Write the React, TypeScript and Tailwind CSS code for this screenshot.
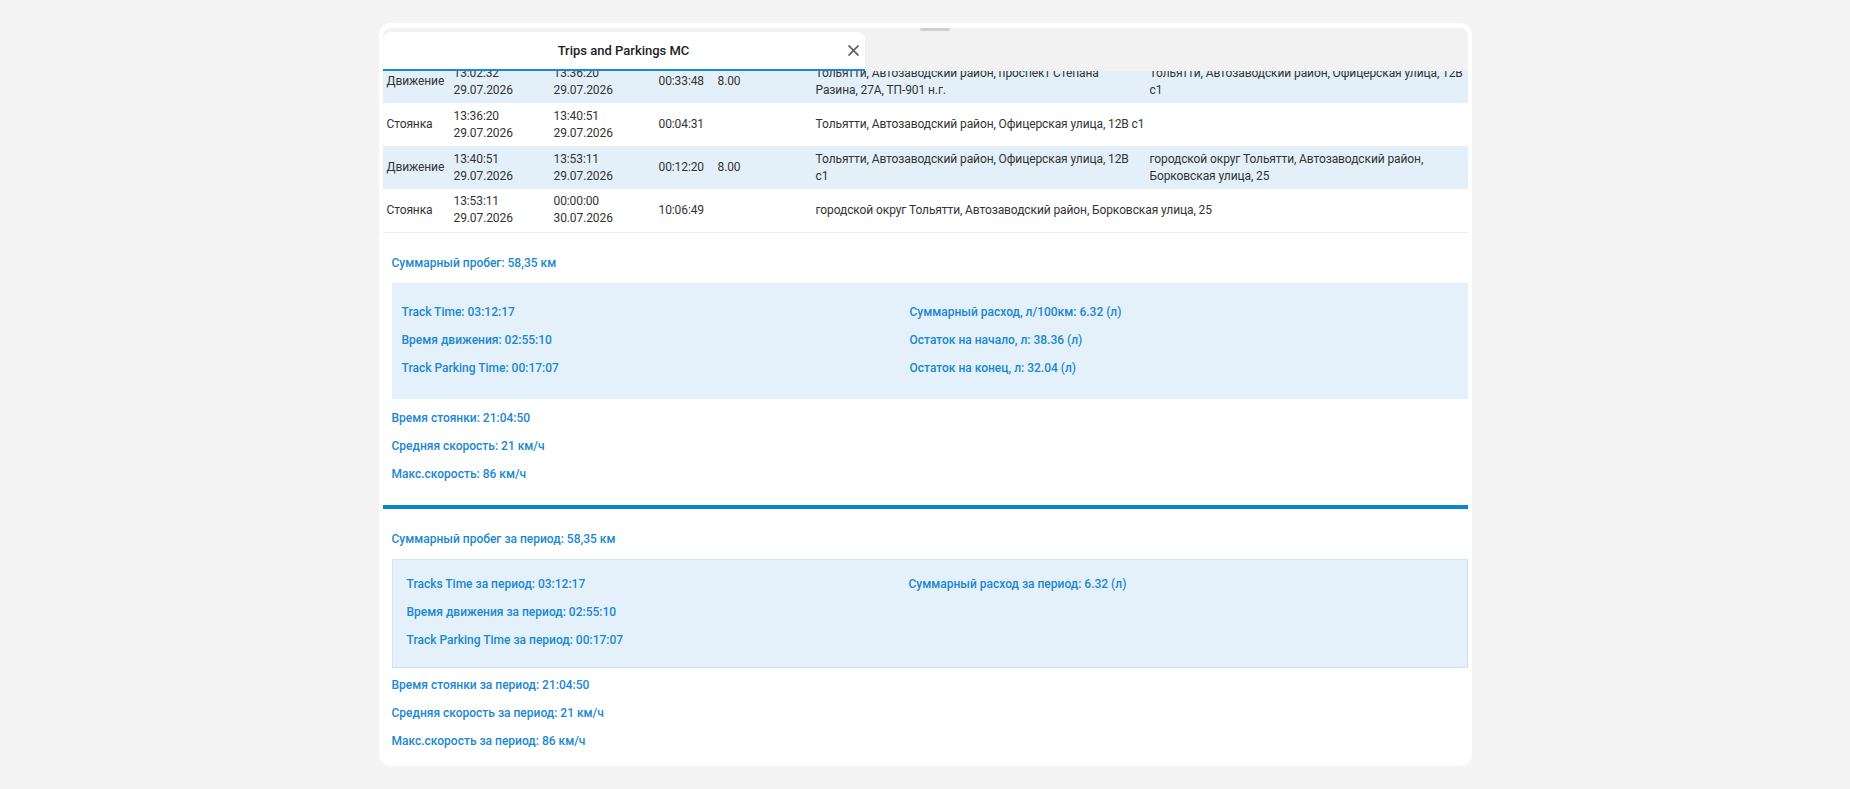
import React from 'react';

type Row = {
  kind: string;
  start: [string, string];
  end: [string, string];
  dur: string;
  fuel?: string;
  from: string;
  to?: string;
  hl?: boolean;
};

const rows: Row[] = [
  {
    kind: 'Движение',
    start: ['13:02:32', '29.07.2026'],
    end: ['13:36:20', '29.07.2026'],
    dur: '00:33:48',
    fuel: '8.00',
    from: 'Тольятти, Автозаводский район, проспект Степана Разина, 27А, ТП-901 н.г.',
    to: 'Тольятти, Автозаводский район, Офицерская улица, 12В с1',
    hl: true,
  },
  {
    kind: 'Стоянка',
    start: ['13:36:20', '29.07.2026'],
    end: ['13:40:51', '29.07.2026'],
    dur: '00:04:31',
    from: 'Тольятти, Автозаводский район, Офицерская улица, 12В с1',
  },
  {
    kind: 'Движение',
    start: ['13:40:51', '29.07.2026'],
    end: ['13:53:11', '29.07.2026'],
    dur: '00:12:20',
    fuel: '8.00',
    from: 'Тольятти, Автозаводский район, Офицерская улица, 12В с1',
    to: 'городской округ Тольятти, Автозаводский район, Борковская улица, 25',
    hl: true,
  },
  {
    kind: 'Стоянка',
    start: ['13:53:11', '29.07.2026'],
    end: ['00:00:00', '30.07.2026'],
    dur: '10:06:49',
    from: 'городской округ Тольятти, Автозаводский район, Борковская улица, 25',
  },
];

const Stat = ({ children }: { children: React.ReactNode }) => (
  <div className="flex h-7 items-center text-[12px] font-medium text-[#1a88d2]">{children}</div>
);

export default function App() {
  return (
    <div className="flex min-h-screen justify-center bg-[#f4f4f4] font-['Roboto','Noto_Sans',sans-serif]">
      <div className="mt-[23px] flex h-[743px] w-[1093px] flex-col rounded-[12px] bg-white px-1 pb-1 pt-[5px]">
        {/* Header */}
        <div className="relative flex h-[43px] shrink-0 rounded-t-[8px] bg-[#f2f2f2] pt-1">
          <div className="absolute left-[537px] top-0 h-[3px] w-[30px] rounded-full bg-[#cfcfcf]" />
          <div className="relative flex w-[482px] items-center justify-center rounded-t-[8px] border-b-2 border-[#1a88d2] bg-white">
            <span className="text-[13px] font-medium text-[#222]">Trips and Parkings MC</span>
            <button className="absolute right-[3px] top-1/2 flex h-4 w-4 -translate-y-1/2 items-center justify-center text-[#555]">
              <svg width="11" height="11" viewBox="0 0 11 11" fill="none" stroke="currentColor" strokeWidth="1.7" strokeLinecap="round">
                <path d="M1 1L10 10M10 1L1 10" />
              </svg>
            </button>
          </div>
        </div>

        {/* Content */}
        <div className="flex-1 overflow-hidden">
          <table className="-mt-[11px] w-full table-fixed border-collapse border-b border-[#ececec] text-[12px] leading-[17px] tracking-[-0.1px] text-[#333]">
            <colgroup>
              <col className="w-[67px]" />
              <col className="w-[100px]" />
              <col className="w-[105px]" />
              <col className="w-[59px]" />
              <col className="w-[98px]" />
              <col className="w-[334px]" />
              <col />
            </colgroup>
            <tbody>
              {rows.map((r, i) => (
                <tr key={i} className={`h-[43px] ${r.hl ? 'bg-[#e3f0f9]' : 'bg-white'}`}>
                  <td className="px-1 align-middle">{r.kind}</td>
                  <td className="px-1 align-middle">
                    {r.start[0]}
                    <br />
                    {r.start[1]}
                  </td>
                  <td className="px-1 align-middle">
                    {r.end[0]}
                    <br />
                    {r.end[1]}
                  </td>
                  <td className="px-1 align-middle">{r.dur}</td>
                  <td className="px-1 align-middle">{r.fuel ?? ''}</td>
                  {r.to ? (
                    <>
                      <td className="px-1 align-middle">{r.from}</td>
                      <td className="px-1 align-middle">{r.to}</td>
                    </>
                  ) : (
                    <td colSpan={2} className="px-1 align-middle">{r.from}</td>
                  )}
                </tr>
              ))}
            </tbody>
          </table>

          {/* Trip summary */}
          <div className="pl-[9px]">
            <div className="mt-[16px]">
              <Stat>Суммарный пробег: 58,35 км</Stat>
            </div>
            <div className="mt-[6px] grid grid-cols-[508px_1fr] bg-[#e4f1fa] pb-[17px] pl-[10px] pt-[15px]">
              <div>
                <Stat>Track Time: 03:12:17</Stat>
                <Stat>Время движения: 02:55:10</Stat>
                <Stat>Track Parking Time: 00:17:07</Stat>
              </div>
              <div>
                <Stat>Суммарный расход, л/100км: 6.32 (л)</Stat>
                <Stat>Остаток на начало, л: 38.36 (л)</Stat>
                <Stat>Остаток на конец, л: 32.04 (л)</Stat>
              </div>
            </div>
            <div className="mt-[5px]">
              <Stat>Время стоянки: 21:04:50</Stat>
              <Stat>Средняя скорость: 21 км/ч</Stat>
              <Stat>Макс.скорость: 86 км/ч</Stat>
            </div>
          </div>

          <div className="mt-[17px] h-1 bg-[#0a86cc]" />

          {/* Period summary */}
          <div className="pl-[9px]">
            <div className="mt-[16px]">
              <Stat>Суммарный пробег за период: 58,35 км</Stat>
            </div>
            <div className="mt-[6px] grid grid-cols-[502px_1fr] border border-[#cfe4f2] bg-[#e4f1fa] pb-[13px] pl-[14px] pt-[10px]">
              <div>
                <Stat>Tracks Time за период: 03:12:17</Stat>
                <Stat>Время движения за период: 02:55:10</Stat>
                <Stat>Track Parking Time за период: 00:17:07</Stat>
              </div>
              <div>
                <Stat>Суммарный расход за период: 6.32 (л)</Stat>
              </div>
            </div>
            <div className="mt-[3px]">
              <Stat>Время стоянки за период: 21:04:50</Stat>
              <Stat>Средняя скорость за период: 21 км/ч</Stat>
              <Stat>Макс.скорость за период: 86 км/ч</Stat>
            </div>
          </div>
        </div>
      </div>
    </div>
  );
}
